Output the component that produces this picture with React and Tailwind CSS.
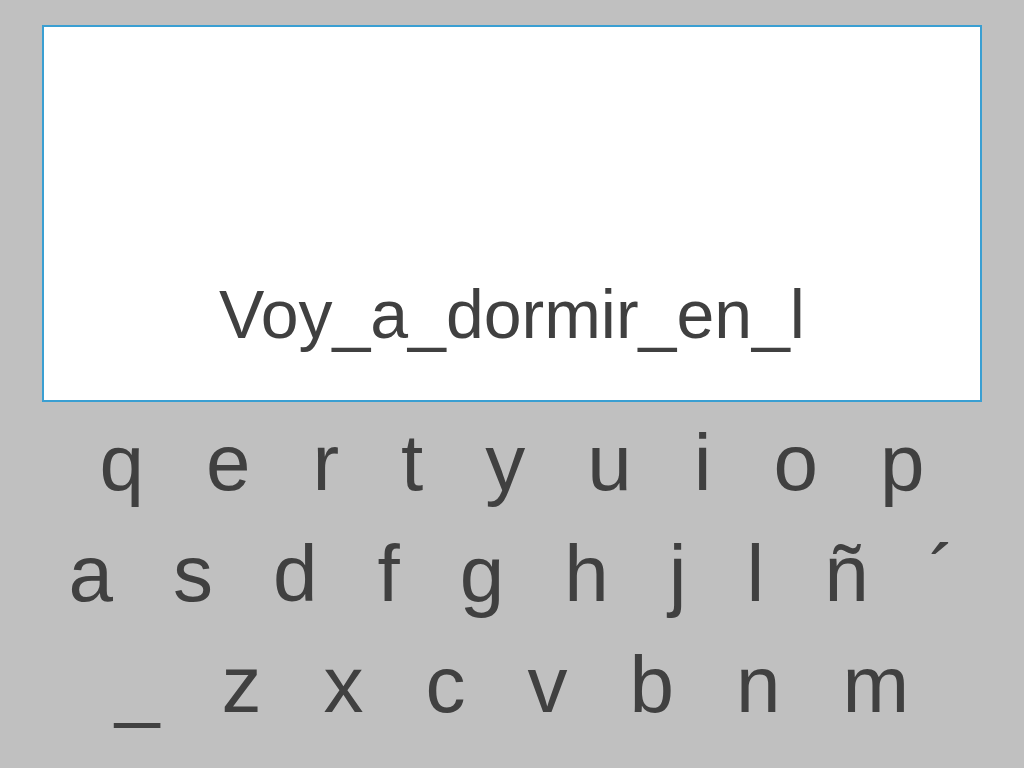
const rows = [
  { keys: ["q", "e", "r", "t", "y", "u", "i", "o", "p"], gap: "gap-[62px]" },
  { keys: ["a", "s", "d", "f", "g", "h", "j", "l", "ñ", "´"], gap: "gap-[60px]" },
  { keys: ["_", "z", "x", "c", "v", "b", "n", "m"], gap: "gap-[62px]" },
];

export default function App() {
  return (
    <div className="min-h-screen w-full bg-[#c0c0c0] text-[#404040] font-['Liberation_Sans',Arial,sans-serif] flex flex-col pt-[25px] px-[42px]">
      {/* typed text display */}
      <div className="h-[377px] bg-white border-2 border-[#3a9fd2] flex flex-col justify-end items-center pb-[52px]">
        <p className="text-[68px] leading-none">Voy_a_dormir_en_l</p>
      </div>

      {/* keyboard */}
      <div className="mt-[5px] flex flex-col">
        {rows.map((row, i) => (
          <div
            key={i}
            className={`flex justify-center ${row.gap} text-[80px] leading-[111px]`}
          >
            {row.keys.map((k) => (
              <span key={k}>{k}</span>
            ))}
          </div>
        ))}
      </div>
    </div>
  );
}
